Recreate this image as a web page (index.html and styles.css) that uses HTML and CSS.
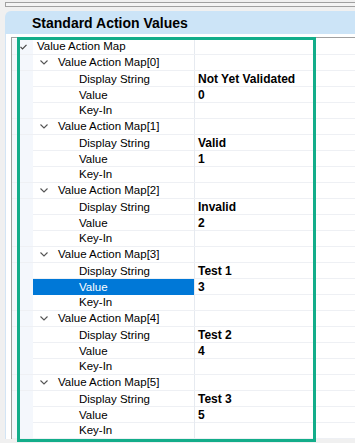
FILE: index.html
```html
<!DOCTYPE html>
<html>
<head>
<meta charset="utf-8">
<link rel="stylesheet" href="styles.css">
</head>
<body>
<div class="topbar"></div>
<div class="panel">
  <div class="header">Standard Action Values</div>
  <div class="body">
    <div class="grid">
      <div class="row"><div class="margin"><svg class="check" width="8" height="6" viewBox="0 0 8 6"><path d="M0.5 2.8 L2.5 4.8 L6.5 0.8" fill="none" stroke="#444" stroke-width="1.2"/></svg></div><div class="name l0">Value Action Map</div><div class="val"></div></div>

      <div class="row"><div class="margin"></div><div class="name l1"><svg class="chev" width="8" height="5" viewBox="0 0 8 5"><path d="M0.5 0.5 L4 4 L7.5 0.5" fill="none" stroke="#555" stroke-width="1.1"/></svg>Value Action Map[0]</div><div class="val"></div></div>
      <div class="row"><div class="margin"></div><div class="name l2">Display String</div><div class="val">Not Yet Validated</div></div>
      <div class="row"><div class="margin"></div><div class="name l2">Value</div><div class="val">0</div></div>
      <div class="row"><div class="margin"></div><div class="name l2">Key-In</div><div class="val"></div></div>

      <div class="row"><div class="margin"></div><div class="name l1"><svg class="chev" width="8" height="5" viewBox="0 0 8 5"><path d="M0.5 0.5 L4 4 L7.5 0.5" fill="none" stroke="#555" stroke-width="1.1"/></svg>Value Action Map[1]</div><div class="val"></div></div>
      <div class="row"><div class="margin"></div><div class="name l2">Display String</div><div class="val">Valid</div></div>
      <div class="row"><div class="margin"></div><div class="name l2">Value</div><div class="val">1</div></div>
      <div class="row"><div class="margin"></div><div class="name l2">Key-In</div><div class="val"></div></div>

      <div class="row"><div class="margin"></div><div class="name l1"><svg class="chev" width="8" height="5" viewBox="0 0 8 5"><path d="M0.5 0.5 L4 4 L7.5 0.5" fill="none" stroke="#555" stroke-width="1.1"/></svg>Value Action Map[2]</div><div class="val"></div></div>
      <div class="row"><div class="margin"></div><div class="name l2">Display String</div><div class="val">Invalid</div></div>
      <div class="row"><div class="margin"></div><div class="name l2">Value</div><div class="val">2</div></div>
      <div class="row"><div class="margin"></div><div class="name l2">Key-In</div><div class="val"></div></div>

      <div class="row"><div class="margin"></div><div class="name l1"><svg class="chev" width="8" height="5" viewBox="0 0 8 5"><path d="M0.5 0.5 L4 4 L7.5 0.5" fill="none" stroke="#555" stroke-width="1.1"/></svg>Value Action Map[3]</div><div class="val"></div></div>
      <div class="row"><div class="margin"></div><div class="name l2">Display String</div><div class="val">Test 1</div></div>
      <div class="row"><div class="margin"></div><div class="name l2 selected">Value</div><div class="val">3</div></div>
      <div class="row"><div class="margin"></div><div class="name l2">Key-In</div><div class="val"></div></div>

      <div class="row"><div class="margin"></div><div class="name l1"><svg class="chev" width="8" height="5" viewBox="0 0 8 5"><path d="M0.5 0.5 L4 4 L7.5 0.5" fill="none" stroke="#555" stroke-width="1.1"/></svg>Value Action Map[4]</div><div class="val"></div></div>
      <div class="row"><div class="margin"></div><div class="name l2">Display String</div><div class="val">Test 2</div></div>
      <div class="row"><div class="margin"></div><div class="name l2">Value</div><div class="val">4</div></div>
      <div class="row"><div class="margin"></div><div class="name l2">Key-In</div><div class="val"></div></div>

      <div class="row"><div class="margin"></div><div class="name l1"><svg class="chev" width="8" height="5" viewBox="0 0 8 5"><path d="M0.5 0.5 L4 4 L7.5 0.5" fill="none" stroke="#555" stroke-width="1.1"/></svg>Value Action Map[5]</div><div class="val"></div></div>
      <div class="row"><div class="margin"></div><div class="name l2">Display String</div><div class="val">Test 3</div></div>
      <div class="row"><div class="margin"></div><div class="name l2">Value</div><div class="val">5</div></div>
      <div class="row"><div class="margin"></div><div class="name l2">Key-In</div><div class="val"></div></div>
    </div>
  </div>
</div>
<div class="highlight"></div>
</body>
</html>
```

FILE: styles.css
```css
html, body {
  margin: 0;
  padding: 0;
  background: #f0f0f0;
  font-family: "Liberation Sans", Arial, sans-serif;
  overflow: hidden;
}
body {
  width: 355px;
  height: 443px;
  position: relative;
}
.topbar {
  margin: 2px 0 0 5px;
  height: 3px;
  border: 1px solid #a0a0a0;
  border-right: none;
  background: #f4f4f4;
}
.panel {
  margin: 4px 0 0 5px;
}
.header {
  height: 23px;
  background: #cce4f7;
  border-top-left-radius: 6px;
  padding-left: 27px;
  font-weight: bold;
  font-size: 14px;
  line-height: 25px;
  color: #000;
  box-sizing: border-box;
}
.body {
  background: #fff;
  border-left: 1px solid #d3e5f5;
  padding: 3px 0 0 5px;
}
.grid {
  border-top: 1px solid #a0a0a0;
  border-left: 1px solid #a0a0a0;
  padding-top: 1px;
  background: #fff;
}
.row {
  display: grid;
  grid-template-columns: 21px 162px 1fr;
  height: 15px;
  border-bottom: 1px solid #eef0f4;
}
.margin {
  background: #f4f7fc;
}
.check {
  display: block;
  margin: 5px 0 0 8px;
}
.name {
  border-right: 1px solid #e6eaf0;
  font-size: 11.5px;
  line-height: 15px;
  color: #000;
  white-space: nowrap;
  display: flex;
  align-items: center;
}
.l0 { padding-left: 4px; }
.l1 { padding-left: 7px; }
.l2 { padding-left: 46px; }
.chev {
  display: block;
  margin-right: 10px;
}
.selected {
  background: #0078d7;
  color: #fff;
}
.val {
  padding-left: 3px;
  font-size: 12px;
  font-weight: bold;
  line-height: 16px;
  color: #000;
  white-space: nowrap;
}
.highlight {
  position: absolute;
  left: 17px;
  top: 37px;
  width: 299px;
  height: 405px;
  border: 3px solid #13ad8a;
  box-sizing: border-box;
  pointer-events: none;
}
```
